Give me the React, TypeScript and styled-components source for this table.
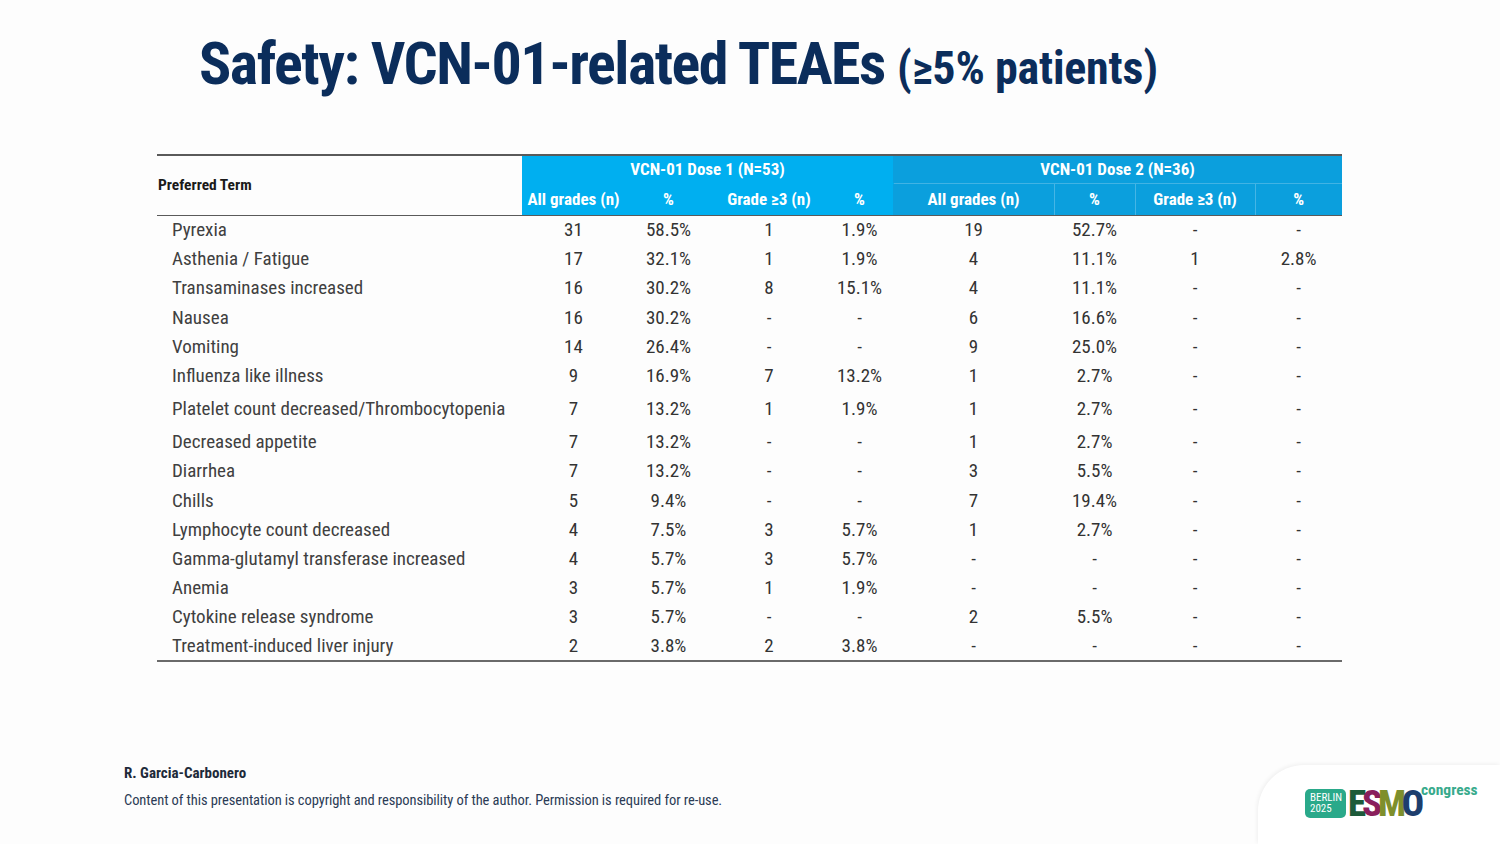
import styled, { createGlobalStyle } from 'styled-components';

const GlobalStyle = createGlobalStyle`
  html, body {
    margin: 0;
    padding: 0;
    background: #fdfdfd;
  }
  * {
    box-sizing: border-box;
  }
`;

const font = `"Roboto Condensed", "Liberation Sans", Arial, sans-serif`;

type Row = {
  term: string;
  values: string[];
  tall?: boolean;
};

const rows: Row[] = [
  { term: 'Pyrexia', values: ['31', '58.5%', '1', '1.9%', '19', '52.7%', '-', '-'] },
  { term: 'Asthenia / Fatigue', values: ['17', '32.1%', '1', '1.9%', '4', '11.1%', '1', '2.8%'] },
  { term: 'Transaminases increased', values: ['16', '30.2%', '8', '15.1%', '4', '11.1%', '-', '-'] },
  { term: 'Nausea', values: ['16', '30.2%', '-', '-', '6', '16.6%', '-', '-'] },
  { term: 'Vomiting', values: ['14', '26.4%', '-', '-', '9', '25.0%', '-', '-'] },
  { term: 'Influenza like illness', values: ['9', '16.9%', '7', '13.2%', '1', '2.7%', '-', '-'] },
  {
    term: 'Platelet count decreased/Thrombocytopenia',
    values: ['7', '13.2%', '1', '1.9%', '1', '2.7%', '-', '-'],
    tall: true,
  },
  { term: 'Decreased appetite', values: ['7', '13.2%', '-', '-', '1', '2.7%', '-', '-'] },
  { term: 'Diarrhea', values: ['7', '13.2%', '-', '-', '3', '5.5%', '-', '-'] },
  { term: 'Chills', values: ['5', '9.4%', '-', '-', '7', '19.4%', '-', '-'] },
  { term: 'Lymphocyte count decreased', values: ['4', '7.5%', '3', '5.7%', '1', '2.7%', '-', '-'] },
  { term: 'Gamma-glutamyl transferase increased', values: ['4', '5.7%', '3', '5.7%', '-', '-', '-', '-'] },
  { term: 'Anemia', values: ['3', '5.7%', '1', '1.9%', '-', '-', '-', '-'] },
  { term: 'Cytokine release syndrome', values: ['3', '5.7%', '-', '-', '2', '5.5%', '-', '-'] },
  { term: 'Treatment-induced liver injury', values: ['2', '3.8%', '2', '3.8%', '-', '-', '-', '-'] },
];

const colWidths = [365, 103, 87, 114, 67, 161, 81, 120, 87];
const subHeads = ['All grades (n)', '%', 'Grade ≥3 (n)', '%'];

const Slide = styled.div`
  width: 1500px;
  height: 844px;
  display: flex;
  flex-direction: column;
  font-family: ${font};
  overflow: hidden;
`;

const Title = styled.h1`
  margin: 0;
  padding: 34px 0 0 199px;
  font-family: ${font};
  font-weight: 700;
  font-size: 60px;
  line-height: 60px;
  letter-spacing: -1.5px;
  color: #0b2d5b;
  white-space: nowrap;
`;

const TitleNote = styled.span`
  font-size: 46px;
  letter-spacing: -0.2px;
`;

const Table = styled.table`
  margin: 56px 0 0 157px;
  width: 1185px;
  border-collapse: collapse;
  table-layout: fixed;
  border-top: 2px solid #5a5a5a;
  border-bottom: 2px solid #6a6a6a;
`;

const TermHead = styled.th`
  text-align: left;
  padding: 0 0 0 1px;
  font-size: 15.5px;
  font-weight: 700;
  color: #1a1a1a;
  background: #fdfdfd;
  border-bottom: 1.5px solid #5a5a5a;
`;

const GroupHead = styled.th<{ $dose: 1 | 2 }>`
  height: 28px;
  padding: 0;
  font-size: 17px;
  font-weight: 700;
  color: #fff;
  text-align: center;
  background: ${({ $dose }) => ($dose === 1 ? '#00aff0' : '#0b9fdd')};
  border-bottom: 1px solid ${({ $dose }) => ($dose === 1 ? '#00aff0' : '#41b3e4')};
`;

const SubHead = styled.th<{ $dose: 1 | 2; $first: boolean }>`
  height: 32px;
  padding: 0;
  font-size: 17px;
  font-weight: 700;
  color: #fff;
  text-align: center;
  white-space: nowrap;
  background: ${({ $dose }) => ($dose === 1 ? '#00aff0' : '#0b9fdd')};
  border-left: 1px solid
    ${({ $dose, $first }) => ($dose === 2 && !$first ? '#45b5e5' : 'transparent')};
  border-bottom: 1.5px solid #5a5a5a;
`;

const BodyRow = styled.tr<{ $tall?: boolean }>`
  height: ${({ $tall }) => ($tall ? '37px' : '29.2px')};
`;

const TermCell = styled.td`
  padding: 0 0 0 15px;
  font-size: 19px;
  color: #404040;
  white-space: nowrap;
`;

const ValueCell = styled.td`
  padding: 0;
  text-align: center;
  font-size: 19px;
  color: #333;
`;

const Footer = styled.div`
  margin-top: auto;
  display: flex;
  justify-content: space-between;
  align-items: flex-end;
`;

const Credits = styled.div`
  padding: 0 0 34px 124px;
  display: flex;
  flex-direction: column;
  gap: 10px;
`;

const Author = styled.div`
  font-size: 15px;
  font-weight: 700;
  color: #1e2a3a;
  line-height: 18px;
`;

const Notice = styled.div`
  font-size: 14.5px;
  line-height: 18px;
  letter-spacing: -0.08px;
  color: #2b3b55;
`;

const LogoPanel = styled.div`
  width: 242px;
  height: 79px;
  background: #ffffff;
  border-top-left-radius: 46px;
  box-shadow: -1px -1px 4px rgba(0, 0, 0, 0.06);
  padding: 24px 0 0 47px;
`;

const Logo = styled.div`
  display: flex;
  align-items: flex-end;
`;

const CityBadge = styled.div`
  width: 41px;
  height: 29px;
  border-radius: 5px;
  background: #2aa98a;
  color: #fff;
  font-family: ${font};
  font-size: 11px;
  line-height: 10.5px;
  padding: 4px 0 0 5px;
  margin-right: 2px;
`;

const Letters = styled.div`
  display: flex;
  height: 29px;
  align-items: flex-end;
`;

const Letter = styled.span<{ $color: string }>`
  font-family: ${font};
  font-weight: 800;
  font-size: 37px;
  line-height: 29px;
  letter-spacing: -4.2px;
  color: ${({ $color }) => $color};
`;

const Congress = styled.span`
  align-self: flex-start;
  margin: -8px 0 0 1px;
  font-family: ${font};
  font-weight: 700;
  font-size: 15.5px;
  color: #38aa8c;
`;

export default function App() {
  return (
    <Slide>
      <GlobalStyle />
      <Title>
        Safety: VCN-01-related TEAEs <TitleNote>(≥5% patients)</TitleNote>
      </Title>

      <Table>
        <colgroup>
          {colWidths.map((w, i) => (
            <col key={i} style={{ width: w }} />
          ))}
        </colgroup>
        <thead>
          <tr>
            <TermHead rowSpan={2}>Preferred Term</TermHead>
            <GroupHead $dose={1} colSpan={4}>
              VCN-01 Dose 1 (N=53)
            </GroupHead>
            <GroupHead $dose={2} colSpan={4}>
              VCN-01 Dose 2 (N=36)
            </GroupHead>
          </tr>
          <tr>
            {[1, 2].map((dose) =>
              subHeads.map((label, i) => (
                <SubHead key={`${dose}-${i}`} $dose={dose as 1 | 2} $first={i === 0}>
                  {label}
                </SubHead>
              ))
            )}
          </tr>
        </thead>
        <tbody>
          {rows.map((row) => (
            <BodyRow key={row.term} $tall={row.tall}>
              <TermCell>{row.term}</TermCell>
              {row.values.map((v, i) => (
                <ValueCell key={i}>{v}</ValueCell>
              ))}
            </BodyRow>
          ))}
        </tbody>
      </Table>

      <Footer>
        <Credits>
          <Author>R. Garcia-Carbonero</Author>
          <Notice>
            Content of this presentation is copyright and responsibility of the author. Permission is
            required for re-use.
          </Notice>
        </Credits>
        <LogoPanel>
          <Logo>
            <CityBadge>
              BERLIN
              <br />
              2025
            </CityBadge>
            <Letters>
              <Letter $color="#1d5a3a">E</Letter>
              <Letter $color="#8a1f5c">S</Letter>
              <Letter $color="#7e8f2c">M</Letter>
              <Letter $color="#1d3e6d">O</Letter>
            </Letters>
            <Congress>congress</Congress>
          </Logo>
        </LogoPanel>
      </Footer>
    </Slide>
  );
}
